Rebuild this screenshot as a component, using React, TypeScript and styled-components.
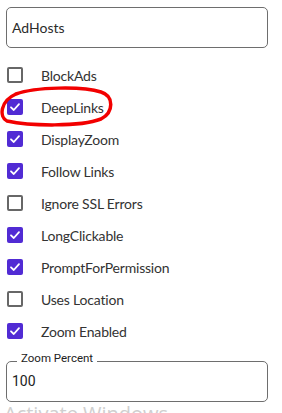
import React from "react";
import styled, { createGlobalStyle } from "styled-components";

const Global = createGlobalStyle`
  html, body { margin: 0; padding: 0; background: #ffffff; }
  body { font-family: "Lato", "Noto Sans", sans-serif; overflow: hidden; }
`;

const Page = styled.div`
  position: relative;
  width: 282px;
  height: 413px;
  overflow: hidden;
  padding: 7px 14px 0 6px;
  box-sizing: border-box;
  display: flex;
  flex-direction: column;
  & > * { flex-shrink: 0; }
`;

const TextBox = styled.div`
  height: 41px;
  border: 1px solid #6e6e6e;
  border-radius: 5px;
  display: flex;
  align-items: center;
  padding-left: 5px;
  font-size: 14px;
  color: #2b2b2b;
  box-sizing: border-box;
`;

const List = styled.div`
  margin-top: 11px;
  display: flex;
  flex-direction: column;
`;

const Row = styled.div`
  height: 32px;
  display: flex;
  align-items: center;
  padding-left: 1px;
  gap: 18px;
`;

const Box = styled.div<{ $checked: boolean }>`
  width: 16px;
  height: 16px;
  box-sizing: border-box;
  border-radius: 2px;
  background: ${(p) => (p.$checked ? "#512bd4" : "#ffffff")};
  border: ${(p) => (p.$checked ? "none" : "2px solid #676767")};
  display: flex;
  align-items: center;
  justify-content: center;
  flex-shrink: 0;
`;

const Label = styled.span`
  font-size: 14px;
  letter-spacing: -0.2px;
  color: #333333;
`;

const Field = styled.fieldset`
  margin: 6px 0 0 0;
  padding: 0 5px 8px 5px;
  border: 1px solid #6e6e6e;
  border-radius: 5px;
  box-sizing: border-box;
`;

const Legend = styled.legend`
  margin-left: 5px;
  padding: 0 4px 6px 4px;
  font-family: "Roboto", "Liberation Sans", sans-serif;
  font-size: 11.5px;
  line-height: 11px;
  color: #222222;
`;

const Value = styled.div`
  font-family: "Roboto", "Liberation Sans", sans-serif;
  font-size: 14px;
  height: 24px;
  line-height: 24px;
  color: #222222;
  margin-top: -1px;
`;

const Watermark = styled.div`
  margin-top: -2px;
  margin-left: -2px;
  font-family: "Open Sans", "Noto Sans", sans-serif;
  font-size: 20px;
  color: #cfcfcf;
  white-space: nowrap;
`;

const Annotation = styled.svg`
  position: absolute;
  left: 0;
  top: 0;
  pointer-events: none;
`;

const Check = () => (
  <svg width="12" height="12" viewBox="0 0 12 12">
    <path d="M2 6.3 L4.8 9 L10 3.2" fill="none" stroke="#ffffff" strokeWidth="1.8" strokeLinecap="round" strokeLinejoin="round" />
  </svg>
);

const items: [string, boolean][] = [
  ["BlockAds", false],
  ["DeepLinks", true],
  ["DisplayZoom", true],
  ["Follow Links", true],
  ["Ignore SSL Errors", false],
  ["LongClickable", true],
  ["PromptForPermission", true],
  ["Uses Location", false],
  ["Zoom Enabled", true],
];

export default function App() {
  return (
    <>
      <Global />
      <Page>
        <TextBox>AdHosts</TextBox>
        <List>
          {items.map(([name, on]) => (
            <Row key={name}>
              <Box $checked={on}>{on && <Check />}</Box>
              <Label>{name}</Label>
            </Row>
          ))}
        </List>
        <Field>
          <Legend>Zoom Percent</Legend>
          <Value>100</Value>
        </Field>
        <Watermark>Activate Windows</Watermark>
        <Annotation width="282" height="413">
          <path
            d="M16 94 C 35 87, 82 86, 101 92 C 114 96, 114 112, 101 119 C 80 127, 30 126, 7 121 C -1 117, 0 101, 16 94"
            fill="none"
            stroke="#f20000"
            strokeWidth="3.5"
            strokeLinecap="round"
          />
        </Annotation>
      </Page>
    </>
  );
}
